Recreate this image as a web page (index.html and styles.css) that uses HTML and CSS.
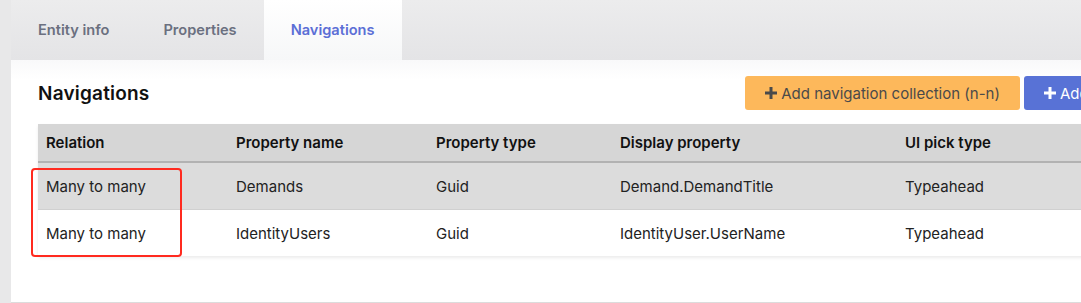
FILE: index.html
```html
<!DOCTYPE html>
<html lang="en">
<head>
    <meta charset="UTF-8">
    <meta name="viewport" content="width=device-width, initial-scale=1.0">
    <title>Navigations</title>
    <link rel="stylesheet" href="styles.css">
</head>
<body>
    <div class="page">
        <div class="tabs">
            <a class="tab">Entity info</a>
            <a class="tab">Properties</a>
            <a class="tab active">Navigations</a>
        </div>

        <div class="panel">
            <div class="panel-head">
                <h2>Navigations</h2>
                <div class="actions">
                    <button class="btn btn-warning">
                        <svg class="plus" viewBox="0 0 12 12"><path d="M6 0v12M0 6h12"/></svg>
                        Add navigation collection (n-n)
                    </button>
                    <button class="btn btn-primary">
                        <svg class="plus" viewBox="0 0 12 12"><path d="M6 0v12M0 6h12"/></svg>
                        Add navigation
                    </button>
                </div>
            </div>

            <div class="table-wrap">
                <table class="nav-table">
                    <thead>
                        <tr>
                            <th class="col-rel">Relation</th>
                            <th class="col-name">Property name</th>
                            <th class="col-type">Property type</th>
                            <th class="col-disp">Display property</th>
                            <th>UI pick type</th>
                        </tr>
                    </thead>
                    <tbody>
                        <tr>
                            <td>Many to many</td>
                            <td>Demands</td>
                            <td>Guid</td>
                            <td>Demand.DemandTitle</td>
                            <td>Typeahead</td>
                        </tr>
                        <tr>
                            <td>Many to many</td>
                            <td>IdentityUsers</td>
                            <td>Guid</td>
                            <td>IdentityUser.UserName</td>
                            <td>Typeahead</td>
                        </tr>
                    </tbody>
                </table>
                <!-- red annotation round the relation column -->
                <div class="highlight"></div>
            </div>
        </div>
    </div>
</body>
</html>
```

FILE: styles.css
```css
html, body {
    margin: 0;
    height: 100%;
    overflow: hidden;
}
body {
    font-family: Inter, "Open Sans", Arial, sans-serif;
    background-color: #e8e8e9;
}
.page {
    width: 1202px;
    margin-left: 11px;
}
.tabs {
    display: flex;
    height: 60px;
    background: linear-gradient(#ececed, #e4e4e6);
}
.tab {
    padding: 0 27px;
    line-height: 60px;
    font-size: 14.6px;
    font-weight: 600;
    color: #6b7080;
    cursor: pointer;
}
.tab.active {
    color: #5c6fd6;
    background: linear-gradient(#ffffff, #f6f7f8);
}
.panel {
    background: linear-gradient(#f9f9fa, #ffffff 20px);
    padding: 16px 27px 46px 27px;
    border-bottom: 1px solid #dcdcdc;
}
.panel-head {
    display: flex;
    align-items: center;
    justify-content: space-between;
    margin-bottom: 14px;
}
.panel-head h2 {
    margin: 0;
    font-size: 19px;
    font-weight: 600;
    letter-spacing: 0.2px;
    color: #111;
}
.actions {
    display: flex;
    gap: 4px;
}
.btn {
    display: flex;
    align-items: center;
    gap: 4px;
    font-family: inherit;
    font-size: 15px;
    height: 34px;
    padding: 0 20px;
    border: none;
    border-radius: 3px;
    cursor: pointer;
}
.btn .plus {
    width: 12px;
    height: 12px;
    stroke: currentColor;
    stroke-width: 3;
}
.btn-warning {
    background: #fdb85b;
    color: #4a4a4a;
}
.btn-primary {
    background: #5872d6;
    color: white;
}
.table-wrap {
    position: relative;
    box-shadow: 0 2px 3px rgba(0,0,0,0.08);
}
.nav-table {
    width: 100%;
    border-collapse: collapse;
    font-size: 15px;
    color: #222;
}
.nav-table th {
    background-color: #d6d6d6;
    border-bottom: 2px solid #b2b2b2;
    height: 37px;
    padding: 0 8px;
    text-align: left;
    font-weight: 600;
    color: #111;
}
.nav-table td {
    height: 46px;
    padding: 0 8px;
    border-top: 1px solid #d0d0d0;
}
.nav-table tbody tr:nth-child(odd) {
    background-color: #dcdcdc;
}
.nav-table tbody tr:nth-child(even) {
    background-color: #ffffff;
}
.col-rel { width: 174px; }
.col-name { width: 184px; }
.col-type { width: 168px; }
.col-disp { width: 269px; }
.highlight {
    position: absolute;
    left: -7px;
    top: 44px;
    width: 147px;
    height: 85px;
    border: 2px solid #ff2a1f;
    border-radius: 4px;
}
```
